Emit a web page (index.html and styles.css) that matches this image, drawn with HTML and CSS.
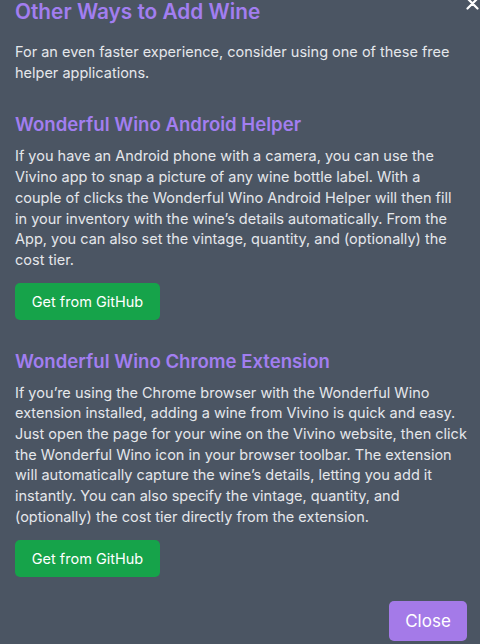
FILE: index.html
```html
<!DOCTYPE html>
<html>
<head>
<meta charset="utf-8">
<link rel="stylesheet" href="styles.css">
</head>
<body>
<div class="modal">
  <button class="x-btn" aria-label="Close">
    <svg width="13" height="13" viewBox="0 0 13 13"><path d="M1.5 1.5 L11.5 11.5 M11.5 1.5 L1.5 11.5" stroke="#fff" stroke-width="2.2" stroke-linecap="round"/></svg>
  </button>
  <h1 class="title">Other Ways to Add Wine</h1>
  <p class="intro">For an even faster experience, consider using one of these free helper applications.</p>

  <section class="helper">
    <h2 class="sub">Wonderful Wino Android Helper</h2>
    <p class="text">If you have an Android phone with a camera, you can use the Vivino app to snap a picture of any wine bottle label. With a couple of clicks the Wonderful Wino Android Helper will then fill in your inventory with the wine’s details automatically. From the App, you can also set the vintage, quantity, and (optionally) the cost tier.</p>
    <button class="gh">Get from GitHub</button>
  </section>

  <section class="helper">
    <h2 class="sub">Wonderful Wino Chrome Extension</h2>
    <p class="text">If you’re using the Chrome browser with the Wonderful Wino extension installed, adding a wine from Vivino is quick and easy. Just open the page for your wine on the Vivino website, then click the Wonderful Wino icon in your browser toolbar. The extension will automatically capture the wine’s details, letting you add it instantly. You can also specify the vintage, quantity, and (optionally) the cost tier directly from the extension.</p>
    <button class="gh">Get from GitHub</button>
  </section>

  <div class="footer">
    <button class="close">Close</button>
  </div>
</div>
</body>
</html>
```
FILE: styles.css
```css
html, body {
  margin: 0;
  padding: 0;
  background: #4b5563;
}
body {
  font-family: Inter, "Noto Sans", sans-serif;
  color: #e5e7eb;
  width: 480px;
  height: 644px;
  overflow: hidden;
}
.modal {
  position: relative;
  padding: 0 13px 0 15px;
}
.x-btn {
  position: absolute;
  top: -3px;
  right: 1px;
  background: none;
  border: 0;
  padding: 0;
  width: 13px;
  height: 13px;
  line-height: 0;
}
.title {
  margin: 0;
  font-size: 20.8px;
  line-height: 24px;
  font-weight: 600;
  color: #a27ef0;
}
.intro {
  margin: 18px 0 0;
  font-size: 14.5px;
  line-height: 20.7px;
}
.helper {
  margin-top: 29px;
}
.sub {
  margin: 0;
  font-size: 18.6px;
  line-height: 24px;
  font-weight: 600;
  color: #a27ef0;
}
.text {
  margin: 10px 0 0;
  font-size: 14.5px;
  line-height: 20.7px;
}
.gh {
  margin-top: 12px;
  background: #16a34a;
  color: #fff;
  border: 0;
  border-radius: 5px;
  width: 145px;
  height: 37px;
  font-family: Inter, "Noto Sans", sans-serif;
  font-size: 14.5px;
  padding: 0;
}
.footer {
  display: flex;
  justify-content: flex-end;
  margin-top: 24px;
}
.close {
  background: #a47ae8;
  color: #fff;
  border: 0;
  border-radius: 5px;
  width: 78px;
  height: 40px;
  font-family: Inter, "Noto Sans", sans-serif;
  font-size: 17px;
  padding: 0;
  margin-right: 0;
}
```
